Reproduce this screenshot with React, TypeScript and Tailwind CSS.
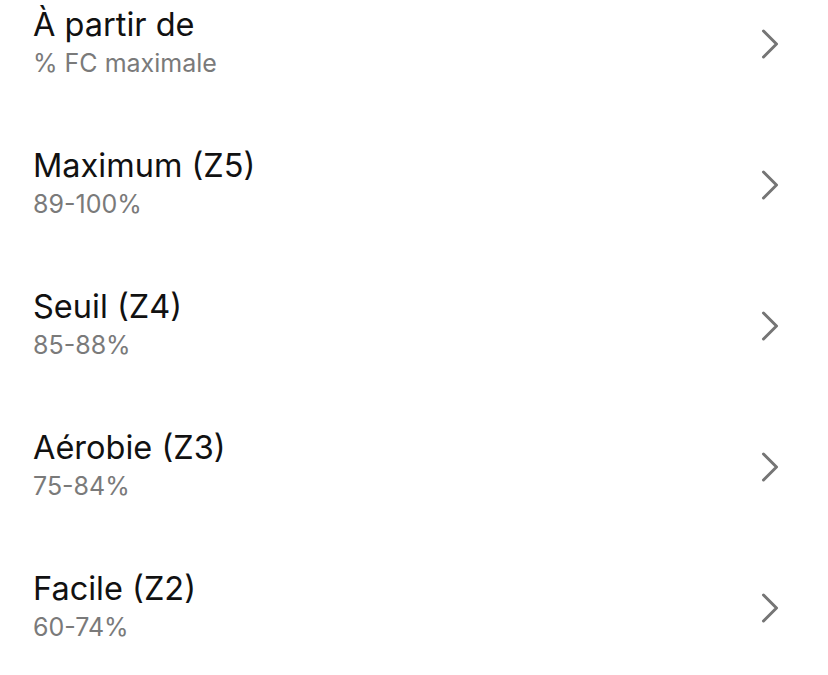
const zones = [
  { title: "À partir de", detail: "% FC maximale" },
  { title: "Maximum (Z5)", detail: "89-100%" },
  { title: "Seuil (Z4)", detail: "85-88%" },
  { title: "Aérobie (Z3)", detail: "75-84%" },
  { title: "Facile (Z2)", detail: "60-74%" },
];

function Chevron() {
  return (
    <svg width="18" height="32" viewBox="0 0 18 32" fill="none" className="mt-[5px]">
      <path
        d="M2.5 3 L15.5 16 L2.5 29"
        stroke="#757575"
        strokeWidth="3"
        strokeLinecap="round"
        strokeLinejoin="round"
      />
    </svg>
  );
}

export default function App() {
  return (
    <div className="h-[675px] w-[828px] overflow-hidden bg-white font-['Inter',sans-serif]">
      <ul className="-mt-[29px]">
        {zones.map((zone) => (
          <li
            key={zone.title}
            className="flex h-[141px] items-center justify-between pl-[33px] pr-[49px]"
          >
            <div className="flex flex-col">
              <span className="text-[32.5px] leading-[40px] text-[#111]">
                {zone.title}
              </span>
              <span className="mt-[3px] text-[25px] leading-[30px] text-[#7a7a7a]">
                {zone.detail}
              </span>
            </div>
            <Chevron />
          </li>
        ))}
      </ul>
    </div>
  );
}
